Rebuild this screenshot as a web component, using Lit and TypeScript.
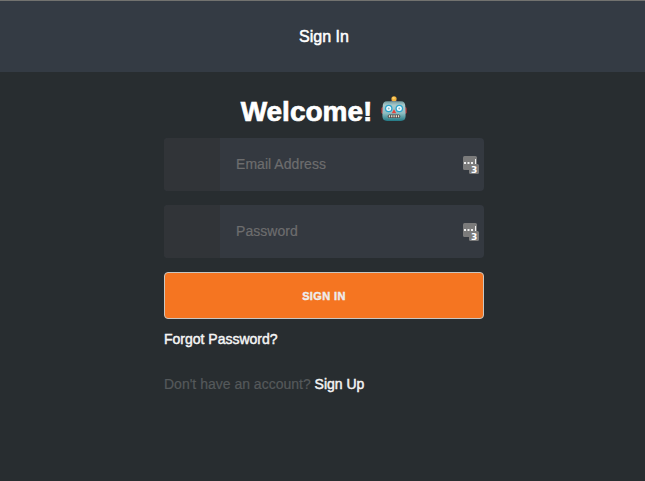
import { LitElement, html, css, svg } from "lit";
import { customElement, property } from "lit/decorators.js";

@customElement("robot-face")
class RobotFace extends LitElement {
  static styles = css`
    :host { display: block; width: 26px; height: 27px; }
    svg { display: block; }
  `;
  render() {
    return html`<svg width="26" height="27" viewBox="0 0 26 27">
      <defs>
        <linearGradient id="head" x1="0" y1="0" x2="0" y2="1">
          <stop offset="0" stop-color="#6f9a9f" />
          <stop offset=".2" stop-color="#a9c8ca" />
          <stop offset=".6" stop-color="#8fbfc3" />
          <stop offset="1" stop-color="#227985" />
        </linearGradient>
      </defs>
      <rect x="0.3" y="11" width="4" height="7" rx="1.8" fill="#b63b3c" />
      <rect x="21.700" y="11" width="4" height="7" rx="1.8" fill="#b63b3c" />
      <path d="M10 6 10.500 4h5l.5 2z" fill="#54406d" />
      <circle cx="13" cy="2.800" r="2.600" fill="#f3b43e" />
      <circle cx="12.600" cy="2.100" r="1.200" fill="#ffd36a" />
      <path d="M6 5.200h14Q24.200 5.400 24.300 10L24.600 20q0 4.800-4.600 5H6q-4.600-.2-4.600-5L1.700 10Q1.800 5.400 6 5.200Z" fill="url(#head)" />
      <circle cx="7.700" cy="12.500" r="3.800" fill="#2ba3cc" />
      <circle cx="18.300" cy="12.500" r="3.800" fill="#2ba3cc" />
      <circle cx="7.700" cy="12.500" r="2.500" fill="#effcff" />
      <circle cx="18.300" cy="12.500" r="2.500" fill="#effcff" />
      <circle cx="7.700" cy="12.500" r="1" fill="#8fb9c6" />
      <circle cx="18.300" cy="12.500" r="1" fill="#8fb9c6" />
      <path d="m13 13.300 2.300 3.900h-4.600z" fill="#e3443d" />
      <rect x="6.700" y="18.500" width="12.600" height="3.600" rx="1.600" fill="#4d4c4c" />
      ${[8, 10.3, 12.6, 14.9, 17.1].map(
        (x) => svg`<rect x=${x - 0.2} y="19.200" width="1.300" height="2.100" fill="#eadfcf" />`
      )}
    </svg>`;
  }
}

@customElement("login-field")
class LoginField extends LitElement {
  @property() type = "text";
  @property() label = "";
  static styles = css`
    :host { display: flex; height: 53px; border-radius: 4px; overflow: hidden; background: #343940; }
    .slot { flex: none; width: 56px; background: #313438; }
    input {
      flex: 1; min-width: 0; box-sizing: border-box; border: 0; outline: 0; margin: 0;
      padding: 0 16px 2px; background: none; color: #fff;
      font: 14px "Liberation Sans", Arial, sans-serif; letter-spacing: 0.04px;
    }
    input::placeholder { color: #6d6d6e; opacity: 1; -webkit-text-stroke: 0.2px #6d6d6e; }
    svg { flex: none; align-self: center; margin: 2px 4px 0 0; }
    text { font: bold 9px "DejaVu Sans", sans-serif; }
  `;
  render() {
    return html`
      <div class="slot"></div>
      <input type=${this.type} placeholder=${this.label} aria-label=${this.label} />
      <svg width="17" height="19" viewBox="0 0 17 19">
        <rect x="0" y="0" width="14" height="14" rx="1.500" fill="#7b7b7b" />
        <rect x="6" y="8" width="10" height="10" rx="1.500" fill="#7b7b7b" />
        <path d="M1 6h2v2H1zM4.500 6h2v2h-2zM8 6h2v2H8zM12 3h1v5h-1z" fill="#eee" />
        <text x="11.200" y="16.500" text-anchor="middle" fill="#fff">3</text>
      </svg>`;
  }
}

@customElement("app-root")
class AppRoot extends LitElement {
  static styles = css`
    :host {
      display: flex; flex-direction: column; box-sizing: border-box; height: 481px;
      background: #282d30; color: #fff;
      font: 14px/20px "Liberation Sans", Arial, sans-serif;
    }
    header {
      box-sizing: border-box; height: 72px; flex: none; border-top: 1px solid #72726f;
      background: #343b44; display: flex; align-items: center; justify-content: center;
      padding-left: 3px; font-size: 16px; -webkit-text-stroke: 0.5px #fff;
    }
    main { width: 320px; margin-left: 164px; display: flex; flex-direction: column; }
    .welcome {
      display: flex; justify-content: center; gap: 9px; height: 66px; box-sizing: border-box;
      padding-top: 24px;
    }
    h1 { margin: 0; font-size: 28px; line-height: 32px; -webkit-text-stroke: 0.7px #fff; }
    form { display: flex; flex-direction: column; gap: 14px; }
    button {
      box-sizing: border-box; height: 47px; border: 1px solid #c9c6c1; border-radius: 4px;
      background: #f57521; color: #ededed; padding: 0;
      font: bold 11px "Liberation Sans", Arial, sans-serif; letter-spacing: 0.4px;
      -webkit-text-stroke: 0.4px #ededed;
    }
    a { color: #f5f5f5; text-decoration: none; -webkit-text-stroke: 0.45px #f5f5f5; }
    .forgot { margin-top: 10px; }
    .signup { margin-top: 25px; color: #55595b; -webkit-text-stroke: 0.2px #55595b; }
  `;
  render() {
    return html`
      <header>Sign In</header>
      <main>
        <div class="welcome"><h1>Welcome!</h1><robot-face></robot-face></div>
        <form>
          <login-field type="email" label="Email Address"></login-field>
          <login-field type="password" label="Password"></login-field>
          <button type="button">SIGN IN</button>
        </form>
        <div class="forgot"><a href="#">Forgot Password?</a></div>
        <div class="signup">Don't have an account? <a href="#">Sign Up</a></div>
      </main>`;
  }
}
